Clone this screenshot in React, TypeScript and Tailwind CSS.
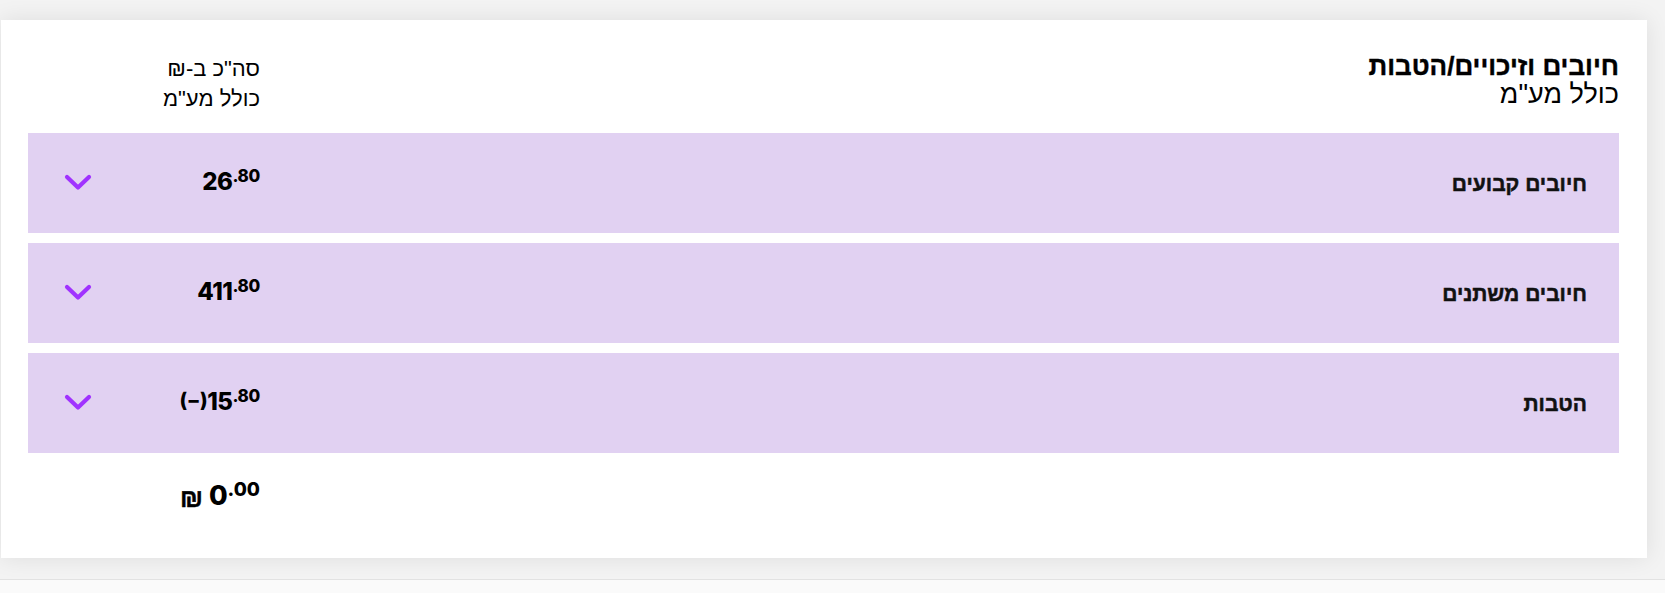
import React from "react";

const heb = { fontFamily: '"Liberation Sans", "DejaVu Sans", sans-serif' } as React.CSSProperties;

function Chevron() {
  return (
    <svg width="28" height="18" viewBox="0 0 28 18" className="block">
      <path d="M3 3 L14 13.5 L25 3" fill="none" stroke="#a032ff" strokeWidth="4.2" strokeLinecap="round" strokeLinejoin="round" />
    </svg>
  );
}

function Amount({ whole, cents, prefix }: { whole: string; cents: string; prefix?: string }) {
  return (
    <div dir="ltr" className="flex items-start font-['Inter',sans-serif] font-extrabold text-black leading-none">
      {prefix && <span className="text-[20px] mt-[2px] tracking-[-0.5px]">{prefix}</span>}
      <span className="text-[24px] mt-[2px] tracking-[-0.5px]">{whole}</span>
      <span className="text-[17px] tracking-[-0.3px]">.{cents}</span>
    </div>
  );
}

function Row({ label, whole, cents, prefix }: { label: string; whole: string; cents: string; prefix?: string }) {
  return (
    <div className="flex items-center h-[100px] bg-[#e1d1f2]">
      <div className="flex-1 pr-[32px] text-[21px] font-bold text-[#111] pt-[2px] [-webkit-text-stroke:0.5px_#111]" style={heb}>
        {label}
      </div>
      <div dir="ltr" className="w-[232px] flex items-center pl-[36px]">
        <Chevron />
        <div className="ml-auto -mt-[4px]">
          <Amount whole={whole} cents={cents} prefix={prefix} />
        </div>
      </div>
    </div>
  );
}

export default function App() {
  return (
    <div className="w-[1665px] h-[593px] bg-[#f3f3f3] overflow-hidden flex flex-col">
      <div className="pt-[20px] pl-[1px] pr-[18px]">
        <div dir="rtl" className="bg-white h-[538px] shadow-[0_0_22px_rgba(0,0,0,0.09)] pr-[28px] pl-[27px] pt-[32px]">
          <div className="flex items-start h-[81px]" style={heb}>
            <div className="flex-1 text-black">
              <div className="text-[26px] font-bold leading-[28px] [-webkit-text-stroke:0.4px_#000]">חיובים וזיכויים/הטבות</div>
              <div className="text-[27px] leading-[29px]">כולל מע"מ</div>
            </div>
            <div className="w-[232px] text-right text-[22px] leading-[30px] text-black pt-[2px]">
              <div>סה"כ ב-₪</div>
              <div>כולל מע"מ</div>
            </div>
          </div>
          <div className="flex flex-col gap-[10px]">
            <Row label="חיובים קבועים" whole="26" cents="80" />
            <Row label="חיובים משתנים" whole="411" cents="80" />
            <Row label="הטבות" whole="15" cents="80" prefix="(−)" />
          </div>
          <div className="flex h-[92px] items-center">
            <div className="flex-1" />
            <div dir="ltr" className="w-[232px] flex justify-end -mt-[8px]">
              <div className="flex items-start font-['Inter',sans-serif] font-extrabold text-black leading-none">
                <span className="text-[26px] mt-[5px] mr-[6px] [-webkit-text-stroke:0.5px_#000]" style={heb}>₪</span>
                <span className="text-[27px] mt-[2px]">0</span>
                <span className="text-[19px]">.00</span>
              </div>
            </div>
          </div>
        </div>
      </div>
      <div className="mt-[21px] border-t border-[#e2e2e2] flex-1 bg-[#fafafa]" />
    </div>
  );
}
